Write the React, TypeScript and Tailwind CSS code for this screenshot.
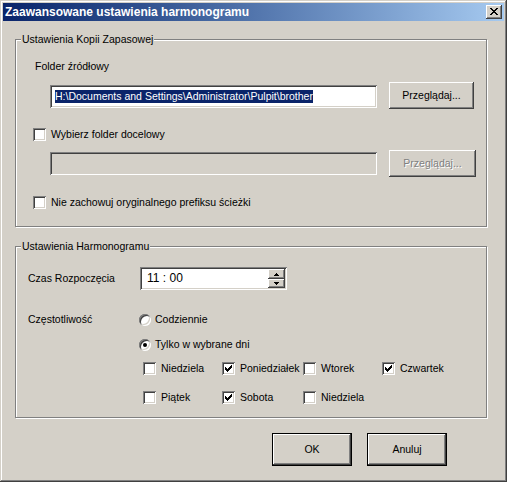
import React from "react";

const raised =
  "shadow-[inset_-1px_-1px_0_#404040,inset_1px_1px_0_#ffffff,inset_-2px_-2px_0_#808080,inset_2px_2px_0_#d4d0c8]";
const sunken =
  "shadow-[inset_1px_1px_0_#808080,inset_-1px_-1px_0_#ffffff,inset_2px_2px_0_#404040,inset_-2px_-2px_0_#d4d0c8]";

function CheckMark() {
  return (
    <svg width="7" height="7" viewBox="0 0 7 7" className="absolute left-[3px] top-[3px]">
      <path
        d="M0 2h1v3H0z M1 3h1v3H1z M2 4h1v3H2z M3 3h1v3H3z M4 2h1v3H4z M5 1h1v3H5z M6 0h1v3H6z"
        fill="#000"
      />
    </svg>
  );
}

function Checkbox({ label, checked = false }: { label: string; checked?: boolean }) {
  return (
    <div className="flex items-center gap-[5px] h-[13px]">
      <div className={`relative w-[13px] h-[13px] shrink-0 bg-white ${sunken}`}>
        {checked && <CheckMark />}
      </div>
      <span className="whitespace-nowrap">{label}</span>
    </div>
  );
}

function Radio({ label, checked = false }: { label: string; checked?: boolean }) {
  return (
    <div className="flex items-center gap-[4px] h-[13px]">
      <div
        className={`relative w-[12px] h-[12px] shrink-0 rounded-full bg-white ${sunken} flex items-center justify-center`}
      >
        {checked && <div className="w-[4px] h-[4px] rounded-full bg-black" />}
      </div>
      <span className="whitespace-nowrap">{label}</span>
    </div>
  );
}

function Button({
  children,
  disabled = false,
  className = "",
}: {
  children: React.ReactNode;
  disabled?: boolean;
  className?: string;
}) {
  return (
    <div
      className={`flex items-center justify-center bg-[#d4d0c8] ${raised} ${
        disabled ? "text-[#808080] [text-shadow:1px_1px_0_#ffffff]" : "text-black"
      } ${className}`}
    >
      {children}
    </div>
  );
}

function DefaultButton({ children }: { children: React.ReactNode }) {
  return (
    <div className="w-[80px] h-[33px] border border-black">
      <div className={`w-full h-full flex items-center justify-center ${raised}`}>{children}</div>
    </div>
  );
}

function Group({
  title,
  className = "",
  children,
}: {
  title: string;
  className?: string;
  children: React.ReactNode;
}) {
  return (
    <div
      className={`relative border border-[#808080] shadow-[1px_1px_0_#ffffff,inset_1px_1px_0_#ffffff] ${className}`}
    >
      <span className="absolute -top-[7px] left-[5px] px-[1px] bg-[#d4d0c8] leading-[13px]">
        {title}
      </span>
      {children}
    </div>
  );
}

function SpinArrow({ up }: { up: boolean }) {
  return (
    <svg width="5" height="3" viewBox="0 0 5 3">
      <path d={up ? "M2 0h1v1H2z M1 1h3v1H1z M0 2h5v1H0z" : "M0 0h5v1H0z M1 1h3v1H1z M2 2h1v1H2z"} fill="#000" />
    </svg>
  );
}

export default function App() {
  return (
    <div
      className="w-[507px] h-[482px] bg-[#d4d0c8] text-black text-[10.5px] leading-[13px] p-[3px] flex flex-col shadow-[inset_-1px_-1px_0_#404040,inset_1px_1px_0_#d4d0c8,inset_-2px_-2px_0_#808080,inset_2px_2px_0_#ffffff]"
      style={{ fontFamily: '"Liberation Sans", Arial, sans-serif' }}
    >
      {/* Title bar */}
      <div className="h-[18px] shrink-0 flex items-center justify-between pl-[2px] pr-[2px] bg-gradient-to-r from-[#0a246a] to-[#a6caf0]">
        <span className="text-white font-bold text-[12px] whitespace-nowrap">
          Zaawansowane ustawienia harmonogramu
        </span>
        <div className={`w-[16px] h-[14px] flex items-center justify-center bg-[#d4d0c8] ${raised}`}>
          <svg width="8" height="7" viewBox="0 0 8 7" className="-mt-[1px]">
            <path
              d="M0 0h2v1H0z M6 0h2v1H6z M1 1h2v1H1z M5 1h2v1H5z M2 2h4v1H2z M3 3h2v1H3z M2 4h4v1H2z M1 5h2v1H1z M5 5h2v1H5z M0 6h2v1H0z M6 6h2v1H6z"
              fill="#000"
            />
          </svg>
        </div>
      </div>

      {/* Backup settings */}
      <Group title="Ustawienia Kopii Zapasowej" className="ml-[12px] mt-[18px] w-[472px] h-[188px] shrink-0">
        <div className="pt-[20px] pl-[19px]">Folder źródłowy</div>
        <div className="flex items-start mt-[9px] pl-[34px]">
          <div className={`mt-[3px] w-[327px] h-[23px] bg-white ${sunken} flex items-center pl-[5px]`}>
            <span className="bg-[#0a246a] text-white whitespace-nowrap">
              H:\Documents and Settings\Administrator\Pulpit\brother
            </span>
          </div>
          <Button className="ml-[12px] w-[85px] h-[27px]">Przeglądaj...</Button>
        </div>
        <div className="mt-[19px] pl-[17px]">
          <Checkbox label="Wybierz folder docelowy" />
        </div>
        <div className="flex items-start mt-[9px] pl-[34px]">
          <div className={`mt-[2px] w-[327px] h-[23px] bg-[#d4d0c8] ${sunken}`} />
          <Button disabled className="ml-[12px] w-[87px] h-[27px]">
            Przeglądaj...
          </Button>
        </div>
        <div className="mt-[19px] pl-[17px]">
          <Checkbox label="Nie zachowuj oryginalnego prefiksu ścieżki" />
        </div>
      </Group>

      {/* Schedule settings */}
      <Group title="Ustawienia Harmonogramu" className="ml-[12px] mt-[19px] w-[472px] h-[172px] shrink-0">
        <div className="flex items-center mt-[20px] pl-[12px]">
          <div className="w-[112px]">Czas Rozpoczęcia</div>
          <div className={`relative w-[147px] h-[23px] bg-white ${sunken} flex items-center`}>
            <span className="pl-[7px] text-[12px]">11 : 00</span>
            <div className="absolute right-[2px] top-[2px] w-[17px] h-[19px] flex flex-col">
              <div className={`h-[10px] flex items-center justify-center bg-[#d4d0c8] ${raised}`}>
                <SpinArrow up />
              </div>
              <div className={`h-[9px] flex items-center justify-center bg-[#d4d0c8] ${raised}`}>
                <SpinArrow up={false} />
              </div>
            </div>
          </div>
        </div>
        <div className="flex mt-[23px] pl-[12px]">
          <div className="w-[111px]">Częstotliwość</div>
          <div className="flex flex-col">
            <Radio label="Codziennie" />
            <div className="mt-[12px]">
              <Radio label="Tylko w wybrane dni" checked />
            </div>
            <div className="grid grid-cols-[79px_81px_79px_auto] gap-y-[16px] mt-[11px] ml-[4px]">
              <Checkbox label="Niedziela" />
              <Checkbox label="Poniedziałek" checked />
              <Checkbox label="Wtorek" />
              <Checkbox label="Czwartek" checked />
              <Checkbox label="Piątek" />
              <Checkbox label="Sobota" checked />
              <Checkbox label="Niedziela" />
            </div>
          </div>
        </div>
      </Group>

      {/* Dialog buttons */}
      <div className="flex gap-[15px] mt-[15px] pl-[269px]">
        <DefaultButton>OK</DefaultButton>
        <DefaultButton>Anuluj</DefaultButton>
      </div>
    </div>
  );
}
